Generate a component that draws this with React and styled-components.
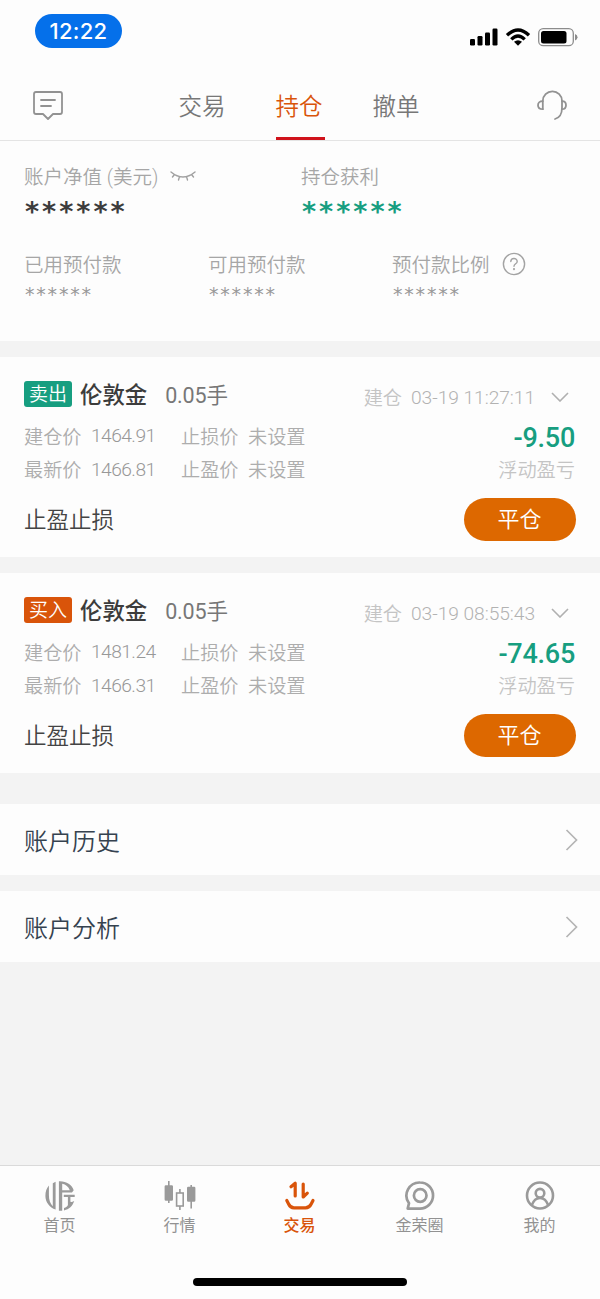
import styled, { createGlobalStyle } from 'styled-components';

const colors = {
  green: '#179e80',
  orange: '#d9540a',
  button: '#dd6800',
  gray: '#a6a6a6',
  light: '#c4c4c4',
  background: '#f3f3f3',
};

const GlobalStyle = createGlobalStyle`
  * {
    box-sizing: border-box;
  }

  body {
    margin: 0;
    background: ${colors.background};
    font-family: Roboto, 'Noto Sans CJK SC', sans-serif;
    font-weight: 350;
  }

  svg {
    display: block;
    flex: none;
  }
`;

const Screen = styled.div`
  display: flex;
  flex-direction: column;
  width: 600px;
  height: 1299px;
  overflow: hidden;
  white-space: nowrap;
`;

const StatusBar = styled.div`
  display: flex;
  align-items: center;
  justify-content: space-between;
  height: 72px;
  padding: 0 22px 10px 35px;
  background: #fdfdfd;
`;

const Clock = styled.div`
  width: 87px;
  height: 34px;
  border-radius: 17px;
  background: #0570ea;
  color: #fff;
  font-family: Inter, sans-serif;
  font-size: 22px;
  font-weight: 500;
  letter-spacing: 0.3px;
  line-height: 34px;
  text-align: center;
`;

const StatusIcons = styled.div`
  display: flex;
  gap: 7px;
  padding-top: 12px;
`;

const Header = styled.header`
  display: flex;
  justify-content: space-between;
  align-items: center;
  height: 69px;
  padding: 0 32px;
  border-bottom: 1px solid #e4e4e4;
  background: #fdfdfd;
`;

const Tabs = styled.nav`
  display: flex;
  gap: 48px;
  height: 68px;
`;

const Tab = styled.div`
  width: 49px;
  height: 68px;
  padding-right: 2px;
  border-bottom: 3px solid ${(props) => (props.$active ? '#d0121b' : 'transparent')};
  color: ${(props) => (props.$active ? colors.orange : '#777')};
  font-size: 23.5px;
  line-height: 70px;
  text-align: center;
`;

const Summary = styled.section`
  height: 200px;
  padding: 19px 24px 0;
  background: #fdfdfd;
`;

const SummaryRow = styled.div`
  display: grid;
  grid-template-columns: ${(props) => props.$columns};
  margin-bottom: ${(props) => props.$gap || 0}px;
`;

const Label = styled.div`
  display: flex;
  align-items: center;
  gap: 12px;
  height: 30px;
  color: ${colors.gray};
  font-size: 19.5px;

  svg {
    margin-top: 2px;
  }
`;

const Masked = styled.div`
  height: ${(props) => (props.$big ? 38 : 30)}px;
  padding-left: 1px;
  color: ${(props) => props.color || '#999'};
  font-family: 'DejaVu Sans', sans-serif;
  font-size: ${(props) => (props.$big ? 27 : 19)}px;
  font-weight: ${(props) => (props.$big ? 700 : 400)};
  letter-spacing: ${(props) => (props.$big ? 3 : 1.8)}px;
  line-height: ${(props) => (props.$big ? 43 : 32)}px;
`;

const Card = styled.section`
  height: 200px;
  margin-top: 16px;
  padding: 22px 24px 0;
  background: #fdfdfd;
`;

const CardHead = styled.div`
  display: flex;
  align-items: center;
  height: 30px;
`;

const Badge = styled.span`
  width: 48px;
  height: 26px;
  border-radius: 3px;
  background: ${(props) => props.color};
  color: #fff;
  font-size: 19px;
  font-weight: 350;
  line-height: 27px;
  text-align: center;
`;

const Symbol = styled.span`
  margin-left: 8px;
  padding-bottom: 2px;
  color: #3c3c3c;
  font-size: 22.4px;
  font-weight: 500;
`;

const Lots = styled.span`
  margin-left: 18px;
  padding-bottom: 2px;
  color: #777;
  font-size: 21.5px;
  font-weight: 400;
  letter-spacing: -0.15px;
`;

const OpenTime = styled.div`
  display: flex;
  align-items: center;
  gap: 9px;
  margin: 5px 7px 0 auto;
  color: ${colors.light};
  font-size: 19.2px;

  svg {
    margin-left: 7px;
  }
`;

const TimeValue = styled.span`
  padding-top: 1px;
  color: #b2b2b2;
  letter-spacing: -0.05px;
`;

const CardBody = styled.div`
  display: flex;
  justify-content: space-between;
  height: 67px;
  margin-top: 10px;
`;

const Prices = styled.div`
  display: grid;
  grid-template-columns: 67px 90px 67px auto;
  grid-auto-rows: 33.5px;
  align-items: center;
  color: #adadad;
  font-size: 19.2px;
`;

const Price = styled.span`
  color: #989898;
  letter-spacing: -0.55px;
`;

const Profit = styled.div`
  display: flex;
  flex-direction: column;
  align-items: flex-end;
  padding-right: 1px;
  color: ${colors.light};
  font-size: 19.2px;
  line-height: 33px;
`;

const Amount = styled.span`
  height: 35px;
  color: ${colors.green};
  font-size: 27px;
  font-weight: 500;
  letter-spacing: -0.25px;
  line-height: 39px;
`;

const CardFoot = styled.div`
  display: flex;
  align-items: center;
  justify-content: space-between;
  margin-top: 12px;
  color: #444;
  font-size: 22.5px;
`;

const FootLabel = styled.span`
  padding-bottom: 4px;
`;

const CloseButton = styled.button`
  width: 112px;
  height: 43px;
  padding: 0 1px 0 0;
  border: 0;
  border-radius: 22px;
  background: ${colors.button};
  color: #fff;
  font: 350 22px/42px Roboto, 'Noto Sans CJK SC', sans-serif;
`;

const Links = styled.div`
  display: grid;
  gap: 16px;
  margin-top: 31px;
`;

const LinkRow = styled.div`
  display: flex;
  align-items: center;
  justify-content: space-between;
  height: 71px;
  padding: 0 22px 1px 24px;
  background: #fdfdfd;
  color: #35424f;
  font-size: 24px;

  svg {
    margin-top: 2px;
  }
`;

const TabBar = styled.nav`
  display: grid;
  grid-template-columns: repeat(5, 1fr);
  grid-template-rows: 1fr auto;
  height: 134px;
  margin-top: auto;
  padding-top: 14px;
  border-top: 1px solid #dadada;
  background: #fdfdfd;
`;

const TabItem = styled.div`
  display: flex;
  flex-direction: column;
  align-items: center;
  gap: 1px;
  padding-right: 1px;
  color: ${(props) => (props.$active ? colors.orange : '#929292')};
  font-size: 16px;
  font-weight: ${(props) => (props.$active ? 500 : 400)};
  line-height: 25px;
`;

const HomeIndicator = styled.div`
  grid-column: 1 / -1;
  justify-self: center;
  width: 214px;
  height: 8px;
  margin-bottom: 13px;
  border-radius: 4px;
  background: #000;
`;

function MessageIcon() {
  return (
    <svg width="32" height="32" viewBox="0 0 32 32" fill="none" stroke="#929292" strokeWidth="1.8" strokeLinejoin="round" strokeLinecap="round">
      <path d="M4 2H28Q30 2 30 4V22Q30 24 28 24H21L16 29L11 24H4Q2 24 2 22V4Q2 2 4 2ZM9 10H23M9 16H19" />
    </svg>
  );
}

function HeadsetIcon() {
  return (
    <svg width="32" height="32" viewBox="0 0 32 32" fill="none" stroke="#929292" strokeWidth="1.8" strokeLinecap="round">
      <path d="M6.8 19V11A9.6 9.6 0 0 1 26 11V17.5C26 24.5 24 27.5 19 29" />
      <path d="M6.8 11.2C3.5 11.2 2 13 2 15.2S3.5 19.2 6.8 19.2M26 11.2C28.8 11.2 30 13 30 15.2S28.8 19.2 26 19.2" />
    </svg>
  );
}

function SignalIcon() {
  return (
    <svg width="28" height="18" viewBox="0 0 28 18">
      <rect x="0" y="11" width="5" height="6.5" rx="1.2" />
      <rect x="7.5" y="8" width="5" height="9.5" rx="1.2" />
      <rect x="15" y="4.5" width="5" height="13" rx="1.2" />
      <rect x="22.5" y="0.5" width="5" height="17" rx="1.2" />
    </svg>
  );
}

function WifiIcon() {
  return (
    <svg width="26" height="18" viewBox="0 0 26 18" fill="none" stroke="#000" strokeWidth="3.3">
      <path d="M2 7.3Q13-3.5 24 7.3M6.3 11.4Q13 4.8 19.7 11.4" />
      <path d="M9 13.8Q13 10.7 17 13.8L13 17.8Z" fill="#000" stroke="none" />
    </svg>
  );
}

function BatteryIcon() {
  return (
    <svg width="40" height="19" viewBox="0 0 40 19">
      <rect x="0.7" y="0.7" width="34.6" height="17" rx="4.5" fill="none" stroke="#8c8c8c" strokeWidth="1.3" />
      <rect x="3" y="3" width="25.5" height="12.4" rx="2.5" />
      <path d="M37 6V12.4Q39.5 11.5 39.5 9.2T37 6Z" fill="#8c8c8c" />
    </svg>
  );
}

function ClosedEyeIcon() {
  return (
    <svg width="26" height="12" viewBox="0 0 26 12" fill="none" stroke="#a0a0a0" strokeWidth="1.4" strokeLinecap="round">
      <path d="M1 2Q13 12 25 2M4.5 4.5L2.5 7M9.5 6.6L8.5 10M16.5 6.6L17.5 10M21.5 4.5L23.5 7" />
    </svg>
  );
}

function HelpIcon() {
  return (
    <svg width="24" height="24" viewBox="0 0 24 24" fill="none" stroke="#a3a3a3" strokeWidth="1.4" strokeLinecap="round">
      <circle cx="12" cy="12" r="10.6" />
      <path d="M8.8 9.6C8.8 5.5 15.2 5.5 15.2 9.4C15.2 11.8 12 11.8 12 14.3" />
      <circle cx="12" cy="17.2" r="0.4" />
    </svg>
  );
}

function ChevronDown() {
  return (
    <svg width="18" height="10" viewBox="0 0 18 10" fill="none" stroke="#b0b0b0" strokeWidth="1.6">
      <path d="M1 1L9 9L17 1" />
    </svg>
  );
}

function ChevronRight() {
  return (
    <svg width="13" height="22" viewBox="0 0 13 22" fill="none" stroke="#b5b5b5" strokeWidth="1.7">
      <path d="M1.5 1L11.5 11L1.5 21" />
    </svg>
  );
}

function LogoIcon() {
  return (
    <svg width="32" height="32" viewBox="0 0 32 32" fill="#9a9a9a">
      <path d="M4.9 5.5V15C4.9 20 6.2 23.5 8.8 26.3V3.2L11.6 1.8V29.6C5.5 27.5 1.4 22.3 1.4 16C1.4 11.5 2.6 8.2 4.9 5.5Z" />
      <path d="M14.9 1.2C22 0.8 28 4.5 29.7 10.2L28 12.6H18.2V30.8H14.9ZM18.2 3.8V10.3H25.8C24.5 6.8 21.8 4.4 18.2 3.8Z" fillRule="evenodd" />
      <path d="M19.8 14.7H30.7V17H26.4V21.2Q26.6 23 30.2 21.1C28.5 26.3 25.2 29.3 20 30.5V28C22.2 27.4 23.4 26.4 23.9 25V17H19.8Z" />
    </svg>
  );
}

function CandlesIcon() {
  return (
    <svg width="32" height="32" viewBox="0 0 32 32" fill="#9a9a9a" stroke="#9a9a9a" strokeWidth="1.6">
      <path d="M4.8 1V23M15.9 9V13M15.9 26V30M27.2 5V28.5" />
      <rect x="1.4" y="6" width="6.8" height="14" rx="0.5" />
      <rect x="12.6" y="13" width="6.6" height="13" fill="none" />
      <rect x="23.8" y="7.5" width="6.8" height="13.5" rx="0.5" />
    </svg>
  );
}

function TradeIcon() {
  return (
    <svg width="32" height="32" viewBox="0 0 32 32" fill="none" stroke="#d9540a" strokeWidth="3.2" strokeLinecap="round" strokeLinejoin="round">
      <path d="M7 6.7L11.2 3.2V16M19.2 4V17L23.3 13.2" />
      <path d="M2.8 20.5L4.6 24Q6.3 27.8 10 27.8H21.5Q25.4 27.8 27.2 24L29 20.5" />
    </svg>
  );
}

function CircleIcon() {
  return (
    <svg width="32" height="32" viewBox="0 0 32 32" fill="none" stroke="#9a9a9a" strokeWidth="2.7" strokeLinejoin="round">
      <path d="M16 2.5A13 13 0 1 1 16 28.6H3.7L5 23.3A13.1 13.1 0 0 1 16 2.5Z" />
      <circle cx="16.2" cy="15.5" r="6.3" />
    </svg>
  );
}

function ProfileIcon() {
  return (
    <svg width="32" height="32" viewBox="0 0 32 32" fill="none" stroke="#9a9a9a" strokeWidth="2.6">
      <circle cx="16" cy="15.5" r="13" />
      <circle cx="16" cy="13.2" r="4.3" />
      <path d="M7.8 25.3C9.5 20.5 12 18 16 18S22.5 20.5 24.2 25.3" />
    </svg>
  );
}

const positions = [
  { side: '卖出', color: colors.green, time: '03-19 11:27:11', open: '1464.91', last: '1466.81', profit: '-9.50' },
  { side: '买入', color: colors.orange, time: '03-19 08:55:43', open: '1481.24', last: '1466.31', profit: '-74.65' },
];

const tabItems = [
  { label: '首页', Icon: LogoIcon },
  { label: '行情', Icon: CandlesIcon },
  { label: '交易', Icon: TradeIcon, active: true },
  { label: '金荣圈', Icon: CircleIcon },
  { label: '我的', Icon: ProfileIcon },
];

function PositionCard({ side, color, time, open, last, profit }) {
  return (
    <Card>
      <CardHead>
        <Badge color={color}>{side}</Badge>
        <Symbol>伦敦金</Symbol>
        <Lots>0.05手</Lots>
        <OpenTime>
          <span>建仓</span>
          <TimeValue>{time}</TimeValue>
          <ChevronDown />
        </OpenTime>
      </CardHead>
      <CardBody>
        <Prices>
          <span>建仓价</span>
          <Price>{open}</Price>
          <span>止损价</span>
          <span>未设置</span>
          <span>最新价</span>
          <Price>{last}</Price>
          <span>止盈价</span>
          <span>未设置</span>
        </Prices>
        <Profit>
          <Amount>{profit}</Amount>
          <span>浮动盈亏</span>
        </Profit>
      </CardBody>
      <CardFoot>
        <FootLabel>止盈止损</FootLabel>
        <CloseButton>平仓</CloseButton>
      </CardFoot>
    </Card>
  );
}

export default function App() {
  return (
    <Screen>
      <GlobalStyle />
      <StatusBar>
        <Clock>12:22</Clock>
        <StatusIcons>
          <SignalIcon />
          <WifiIcon />
          <BatteryIcon />
        </StatusIcons>
      </StatusBar>
      <Header>
        <MessageIcon />
        <Tabs>
          <Tab>交易</Tab>
          <Tab $active>持仓</Tab>
          <Tab>撤单</Tab>
        </Tabs>
        <HeadsetIcon />
      </Header>
      <Summary>
        <SummaryRow $columns="277px 1fr" $gap={20}>
          <Label>
            账户净值 (美元)
            <ClosedEyeIcon />
          </Label>
          <Label>持仓获利</Label>
          <Masked $big color="#3c3c3c">******</Masked>
          <Masked $big color={colors.green}>******</Masked>
        </SummaryRow>
        <SummaryRow $columns="184px 184px 1fr">
          <Label>已用预付款</Label>
          <Label>可用预付款</Label>
          <Label>
            预付款比例
            <HelpIcon />
          </Label>
          <Masked>******</Masked>
          <Masked>******</Masked>
          <Masked>******</Masked>
        </SummaryRow>
      </Summary>
      {positions.map((position) => (
        <PositionCard key={position.time} {...position} />
      ))}
      <Links>
        <LinkRow>
          账户历史
          <ChevronRight />
        </LinkRow>
        <LinkRow>
          账户分析
          <ChevronRight />
        </LinkRow>
      </Links>
      <TabBar>
        {tabItems.map(({ label, Icon, active }) => (
          <TabItem key={label} $active={active}>
            <Icon />
            {label}
          </TabItem>
        ))}
        <HomeIndicator />
      </TabBar>
    </Screen>
  );
}
